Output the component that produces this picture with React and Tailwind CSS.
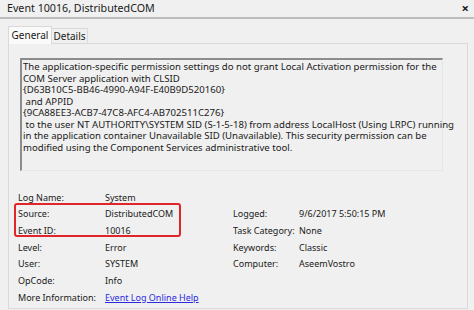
export default function App() {
  const message = [
    "The application-specific permission settings do not grant Local Activation permission for the",
    "COM Server application with CLSID",
    "{D63B10C5-BB46-4990-A94F-E40B9D520160}",
    " and APPID",
    "{9CA88EE3-ACB7-47C8-AFC4-AB702511C276}",
    " to the user NT AUTHORITY\\SYSTEM SID (S-1-5-18) from address LocalHost (Using LRPC) running",
    "in the application container Unavailable SID (Unavailable). This security permission can be",
    "modified using the Component Services administrative tool.",
  ];

  const rows = [
    ["Log Name:", "System", "", ""],
    ["Source:", "DistributedCOM", "Logged:", "9/6/2017 5:50:15 PM"],
    ["Event ID:", "10016", "Task Category:", "None"],
    ["Level:", "Error", "Keywords:", "Classic"],
    ["User:", "SYSTEM", "Computer:", "AseemVostro"],
    ["OpCode:", "Info", "", ""],
  ];

  return (
    <div className="w-[474px] h-[310px] overflow-hidden bg-[#f0f0f0] text-[#1a1a1a] font-['Noto_Sans',sans-serif]">
      {/* Title bar */}
      <div className="h-[19px] flex items-center justify-between pl-[7px] pr-[5px] border-b-2 border-[#bdbdbd]">
        <span className="text-[10.7px] leading-none">Event 10016, DistributedCOM</span>
        <span className="text-[13px] font-bold leading-none">×</span>
      </div>

      {/* Tabs */}
      <div className="flex items-end ml-[8px] mt-[6px] h-[18px] text-[10px]">
        <div className="w-[44px] h-[18px] bg-[#fafafa] border border-b-0 border-[#d9d9d9] flex items-center justify-center relative z-10 -mb-px">
          General
        </div>
        <div className="w-[36px] h-[15px] bg-[#f0f0f0] border border-l-0 border-b-0 border-[#d9d9d9] flex items-center justify-center">
          Details
        </div>
      </div>

      {/* Panel */}
      <div className="ml-[8px] w-[460px] h-[266px] border border-[#d9d9d9] bg-[#f0f0f0] relative">
        <div className="mt-[14px] ml-[11px] w-[423px] h-[113px] border-t-2 border-l-2 border-[#8c8c8c] border-r border-b border-r-[#e6e6e6] border-b-[#e6e6e6] pl-[1px] pt-[1px] text-[9.6px] leading-[11.5px] whitespace-pre">
          {message.map((line, i) => (
            <div key={i}>{line}</div>
          ))}
        </div>

        <div className="relative mt-[18px] ml-[9px] text-[9px]">
          {rows.map((r, i) => (
            <div key={i} className="flex h-[16.7px] items-center">
              <span className="w-[87px]">{r[0]}</span>
              <span className="w-[128px]">{r[1]}</span>
              <span className="w-[66px]">{r[2]}</span>
              <span>{r[3]}</span>
            </div>
          ))}
          <div className="flex h-[16.7px] items-center">
            <span className="w-[87px]">More Information:</span>
            <span className="text-[#2a2ae0] underline">Event Log Online Help</span>
          </div>

          {/* highlight annotation */}
          <div className="absolute left-[-4px] top-[14px] w-[167px] h-[34px] border-2 border-[#e0252b] rounded-[3px]" />
        </div>
      </div>
    </div>
  );
}
